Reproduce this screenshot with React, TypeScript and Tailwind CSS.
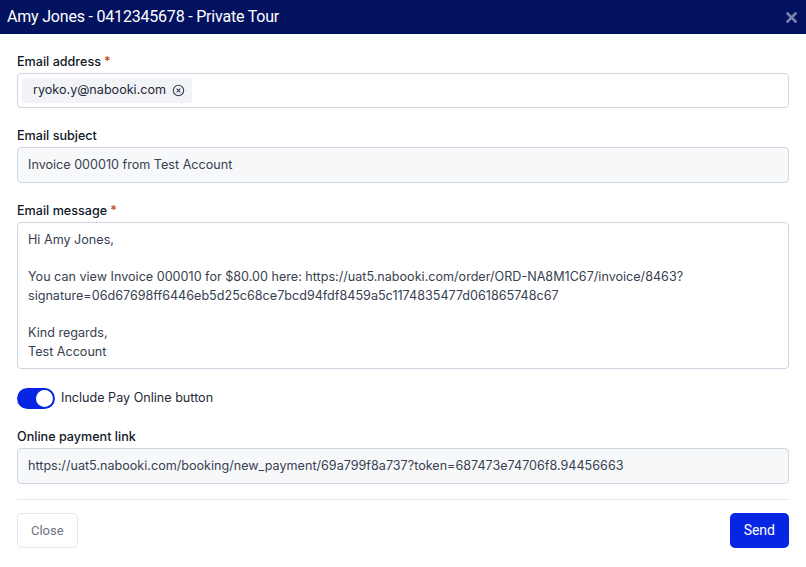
import { useState } from 'react';

const inter = { fontFamily: 'Inter, "Liberation Sans", sans-serif' };

const message = `Hi Amy Jones,

You can view Invoice 000010 for $80.00 here: https://uat5.nabooki.com/order/ORD-NA8M1C67/invoice/8463?signature=06d67698ff6446eb5d25c68ce7bcd94fdf8459a5c1174835477d061865748c67

Kind regards,
Test Account`;

const Label = ({ text, required }: { text: string; required?: boolean }) => (
  <div className="text-[12.6px] font-medium text-[#111827] leading-[18px] mb-[2px]">
    {text}
    {required && <span className="text-[#c2410c] ml-[3px]">*</span>}
  </div>
);

const App = () => {
  const [payOnline, setPayOnline] = useState(true);

  return (
    <div className="w-[806px] h-[567px] bg-white overflow-hidden" style={inter}>
      <div className="h-[34px] bg-[#03125f] flex items-center justify-between pl-[7px] pr-[9px]">
        <span className="text-white text-[16px] font-['Roboto',sans-serif] tracking-[-0.2px]">
          Amy Jones - 0412345678 - Private Tour
        </span>
        <svg width="11" height="11" viewBox="0 0 11 11" stroke="#7a83ac" strokeWidth="2.6" strokeLinecap="square">
          <path d="M1.5 1.5l8 8M9.5 1.5l-8 8" />
        </svg>
      </div>

      <div className="px-[17px] pt-[19px]">
        <Label text="Email address" required />
        <div className="h-[35px] border border-[#cfd6e1] rounded-[4px] flex items-center px-[4px]">
          <div className="h-[25px] bg-[#f1f3f7] rounded-[3px] flex items-center pl-[11px] pr-[7px] gap-[6px] text-[12.6px] text-[#1f2937]">
            ryoko.y@nabooki.com
            <svg width="13" height="13" viewBox="0 0 14 14" fill="none" stroke="#374151" strokeWidth="1.2">
              <circle cx="7" cy="7" r="5.6" />
              <path d="M5 5l4 4M9 5l-4 4" />
            </svg>
          </div>
        </div>

        <div className="mt-[19px]">
          <Label text="Email subject" />
          <div className="h-[36px] border border-[#cfd6e1] rounded-[4px] bg-[#f7f8fa] flex items-center px-[10px] text-[12.6px] text-[#374151]">
            Invoice 000010 from Test Account
          </div>
        </div>

        <div className="mt-[19px]">
          <Label text="Email message" required />
          <div className="h-[147px] border border-[#cfd6e1] rounded-[4px] px-[10px] pt-[8px] text-[12.6px] leading-[18.6px] text-[#374151] whitespace-pre-wrap break-words">
            {message}
          </div>
        </div>

        <div className="mt-[19px] flex items-center gap-[6px]">
          <button
            onClick={() => setPayOnline(!payOnline)}
            className={`w-[38px] h-[21px] rounded-full flex items-center px-[2px] ${payOnline ? 'bg-[#0626e3] justify-end' : 'bg-gray-300 justify-start'}`}
          >
            <span className="w-[17px] h-[17px] rounded-full bg-white" />
          </button>
          <span className="text-[12.6px] text-[#1f2937]">Include Pay Online button</span>
        </div>

        <div className="mt-[19px]">
          <Label text="Online payment link" />
          <div className="h-[36px] border border-[#cfd6e1] rounded-[4px] bg-[#f7f8fa] flex items-center px-[10px] text-[12.6px] text-[#374151]">
            https://uat5.nabooki.com/booking/new_payment/69a799f8a737?token=687473e74706f8.94456663
          </div>
        </div>

        <div className="mt-[15px] border-t border-[#e5e7eb]" />

        <div className="mt-[13px] flex items-center justify-between">
          <button className="h-[35px] px-[13px] border border-[#e3e7ef] rounded-[5px] text-[13px] text-[#6b7280] font-['Roboto',sans-serif]">
            Close
          </button>
          <button className="h-[35px] px-[14px] bg-[#0626e3] rounded-[5px] text-[14px] text-white font-['Roboto',sans-serif]">
            Send
          </button>
        </div>
      </div>
    </div>
  );
};

export default App;
